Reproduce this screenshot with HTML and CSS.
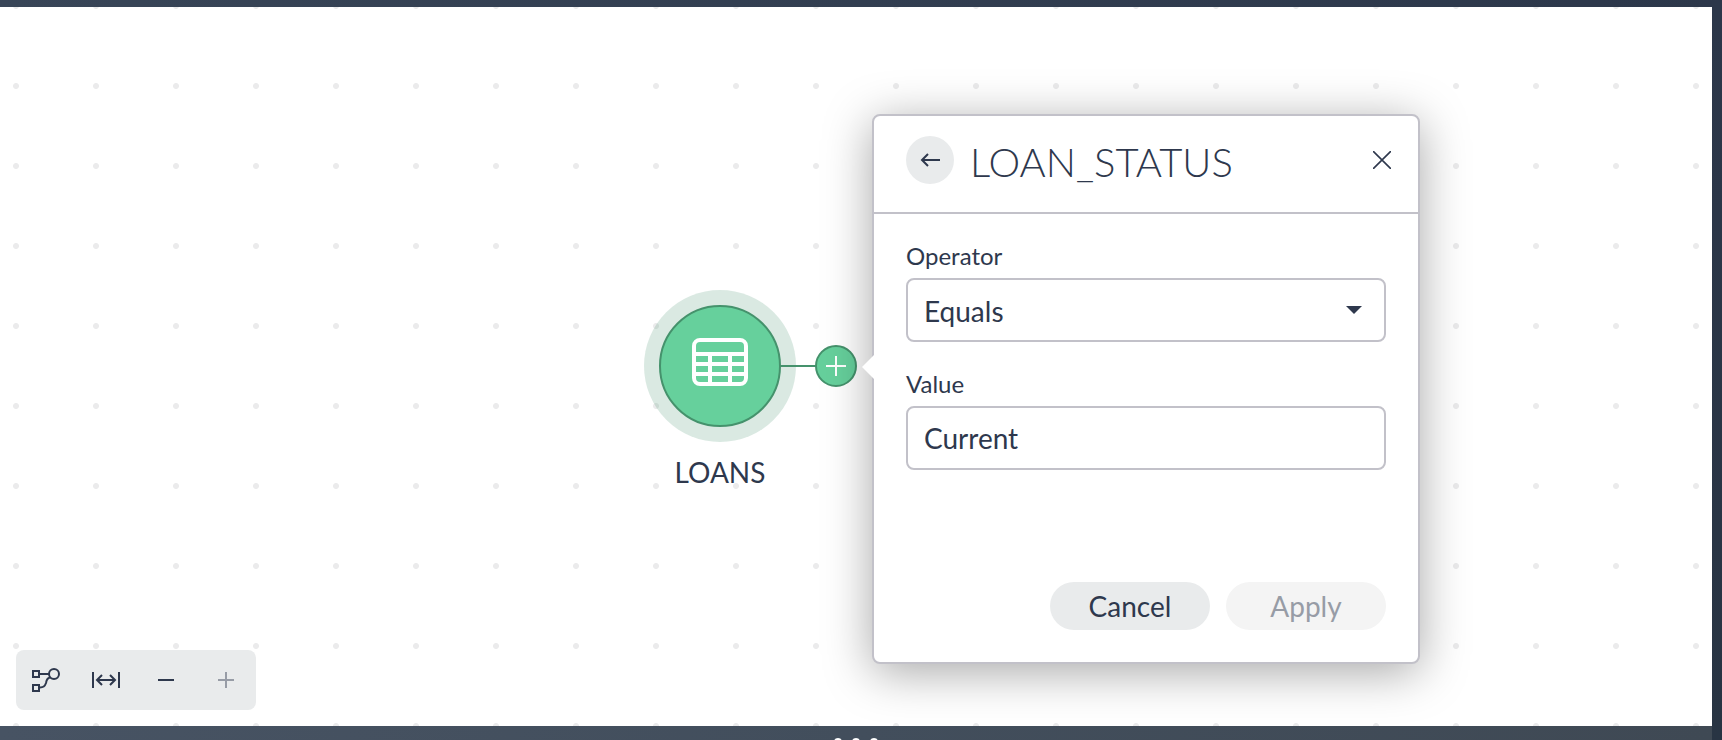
FILE: index.html
```html
<!DOCTYPE html>
<html lang="en">
<head>
<meta charset="utf-8">
<title>Data canvas</title>
<link rel="stylesheet" href="styles.css">
</head>
<body>
<div class="app">
  <header class="top-bar"></header>
  <main class="canvas">
    <div class="node">
      <div class="node-halo">
        <button class="node-disc" type="button" aria-label="Open LOANS">
          <svg width="56" height="48" viewBox="0 0 56 48" fill="none" stroke="#fff" stroke-width="4">
            <rect x="2" y="2" width="52" height="44" rx="6"/>
            <path d="M2 16H54M2 26H54M2 36H54M18 16V46M38 16V46"/>
          </svg>
        </button>
      </div>
      <span class="node-name">LOANS</span>
    </div>
    <div class="connector"></div>
    <button class="add-step" type="button" aria-label="Add step">
      <svg width="20" height="20" viewBox="0 0 20 20" stroke="#fff" stroke-width="2"><path d="M10 0V20M0 10H20"/></svg>
    </button>

    <form class="popover">
      <div class="popover-header">
        <button class="back" type="button" aria-label="Back">
          <svg width="20" height="14" viewBox="0 0 20 14" fill="none" stroke="#2e384d" stroke-width="2"><path d="M20 7H2M8 1L2 7L8 13"/></svg>
        </button>
        <h1 class="popover-title">LOAN_STATUS</h1>
        <button class="close" type="button" aria-label="Close">
          <svg width="18" height="18" viewBox="0 0 18 18" fill="none" stroke="#2e384d" stroke-width="1.6"><path d="M0 0L18 18M18 0L0 18"/></svg>
        </button>
      </div>
      <div class="popover-body">
        <div class="field">
          <label class="label" for="operator">Operator</label>
          <div class="select-wrap">
            <select class="control select" id="operator"><option>Equals</option></select>
            <svg class="caret" width="16" height="8" viewBox="0 0 16 8"><path d="M0 0H16L8 8Z" fill="#2e384d"/></svg>
          </div>
        </div>
        <div class="field">
          <label class="label" for="value">Value</label>
          <input class="control" id="value" type="text" value="Current">
        </div>
        <div class="actions">
          <button class="pill" type="button">Cancel</button>
          <button class="pill" type="submit" disabled>Apply</button>
        </div>
      </div>
    </form>

    <div class="toolbar">
      <button class="tool" type="button" aria-label="Auto layout">
        <svg width="28" height="24" viewBox="0 0 28 24" fill="none" stroke="#2e384d" stroke-width="2">
          <rect x="1" y="3" width="6" height="6"/><rect x="1" y="17" width="6" height="6"/><circle cx="22" cy="6" r="5"/>
          <path d="M8 6H17M8 19.500C12 19.500 13 18 14 15C14.500 12 15 9.500 18.500 9.500"/>
        </svg>
      </button>
      <button class="tool" type="button" aria-label="Fit to width">
        <svg width="28" height="16" viewBox="0 0 28 16" fill="none" stroke="#2e384d" stroke-width="2">
          <path d="M1 0V16M27 0V16M5 8H23M10 3L5 8L10 13M18 3L23 8L18 13"/>
        </svg>
      </button>
      <button class="tool" type="button" aria-label="Zoom out">
        <svg width="16" height="16" viewBox="0 0 16 16" stroke="#2e384d" stroke-width="2"><path d="M0 8H16"/></svg>
      </button>
      <button class="tool" type="button" aria-label="Zoom in" disabled>
        <svg width="16" height="16" viewBox="0 0 16 16" stroke="#979ca6" stroke-width="2"><path d="M0 8H16M8 0V16"/></svg>
      </button>
    </div>
  </main>
  <div class="side-bar"></div>
  <footer class="bottom-bar">
    <span class="grip"></span><span class="grip"></span><span class="grip"></span>
  </footer>
</div>
</body>
</html>
```
FILE: styles.css
```css
* {
  box-sizing: border-box;
}

body {
  margin: 0;
  color: #2e384d;
  font-family: Lato, "Open Sans", sans-serif;
  font-size: 28px;
}

button,
input,
select {
  margin: 0;
  padding: 0;
  border: 0;
  color: inherit;
  font: inherit;
}

svg {
  display: block;
}

.app {
  display: grid;
  grid-template-columns: 1fr 10px;
  grid-template-rows: 7px 1fr 14px;
  height: 100vh;
  overflow: hidden;
}

.top-bar {
  grid-column: 1 / 3;
  background: linear-gradient(90deg, #384557, #2c374a);
}

.side-bar {
  grid-column: 2;
  grid-row: 2 / 4;
  background: linear-gradient(#2c374a, #283443);
}

.bottom-bar {
  display: flex;
  justify-content: center;
  gap: 10px;
  padding-top: 12px;
  overflow: hidden;
  background: linear-gradient(90deg, #475363, #424e5c 50%, #3f4954);
}

.grip {
  flex: none;
  width: 8px;
  height: 8px;
  border-radius: 50%;
  background: #fff;
}

.canvas {
  position: relative;
  overflow: hidden;
  background: #fff radial-gradient(circle, #ebebec 2.6px, transparent 3.4px) -24px -41px / 80px 80px;
}

.node {
  position: absolute;
  top: 283px;
  left: 644px;
  display: flex;
  flex-direction: column;
  align-items: center;
  gap: 13px;
}

.node-halo {
  padding: 15px;
  border-radius: 50%;
  background: rgba(69, 146, 108, 0.2);
}

.node-disc {
  display: grid;
  place-items: center;
  width: 122px;
  height: 122px;
  padding-bottom: 8px;
  border: 2px solid #45926c;
  border-radius: 50%;
  background: #66d09c;
}

.node-name {
  line-height: 34px;
}

.connector {
  position: absolute;
  top: 358px;
  left: 780px;
  width: 36px;
  height: 2px;
  background: #45926c;
}

.add-step {
  position: absolute;
  top: 338px;
  left: 815px;
  display: grid;
  place-items: center;
  width: 42px;
  height: 42px;
  border: 2px solid #45926c;
  border-radius: 50%;
  background: #66d09c;
}

.popover {
  position: absolute;
  top: 107px;
  left: 872px;
  width: 548px;
  border: 2px solid #c2c1c9;
  border-radius: 8px;
  background: #fff;
  box-shadow: 0 8px 48px rgba(0, 0, 0, 0.35);
}

.popover::before {
  content: "";
  position: absolute;
  top: 239px;
  left: -12px;
  width: 12px;
  height: 24px;
  background: #fff;
  clip-path: polygon(100% 0, 0 50%, 100% 100%);
}

.popover-header {
  display: flex;
  align-items: flex-start;
  gap: 16px;
  padding: 20px 24px 26px 32px;
  border-bottom: 2px solid #c2c1c9;
}

.back {
  display: grid;
  place-items: center;
  width: 48px;
  height: 48px;
  border-radius: 50%;
  background: #e9ebec;
}

.popover-title {
  flex: 1;
  margin: 0;
  padding-top: 2px;
  font-size: 40px;
  font-weight: 300;
  line-height: 48px;
}

.close {
  display: grid;
  place-items: center;
  width: 24px;
  height: 48px;
  background: none;
}

.popover-body {
  display: flex;
  flex-direction: column;
  gap: 28px;
  padding: 28px 32px 32px;
}

.field {
  display: flex;
  flex-direction: column;
  gap: 8px;
}

.label {
  font-size: 24px;
  line-height: 28px;
}

.control {
  width: 100%;
  height: 64px;
  padding: 0 16px;
  border: 2px solid #c2c1c9;
  border-radius: 8px;
  background: #fff;
}

.select-wrap {
  position: relative;
}

.select {
  display: block;
  padding-top: 2px;
  appearance: none;
}

.caret {
  position: absolute;
  top: 28px;
  right: 24px;
  pointer-events: none;
}

.actions {
  display: flex;
  justify-content: flex-end;
  gap: 16px;
  margin-top: 84px;
}

.pill {
  width: 160px;
  height: 48px;
  border-radius: 24px;
  background: #e9ebec;
}

.pill:disabled {
  background: #f4f4f4;
  color: #979ca6;
}

.toolbar {
  position: absolute;
  bottom: 16px;
  left: 16px;
  display: flex;
  border-radius: 8px;
  background: #e9ebec;
}

.tool {
  display: grid;
  place-items: center;
  width: 60px;
  height: 60px;
  background: none;
}
```
